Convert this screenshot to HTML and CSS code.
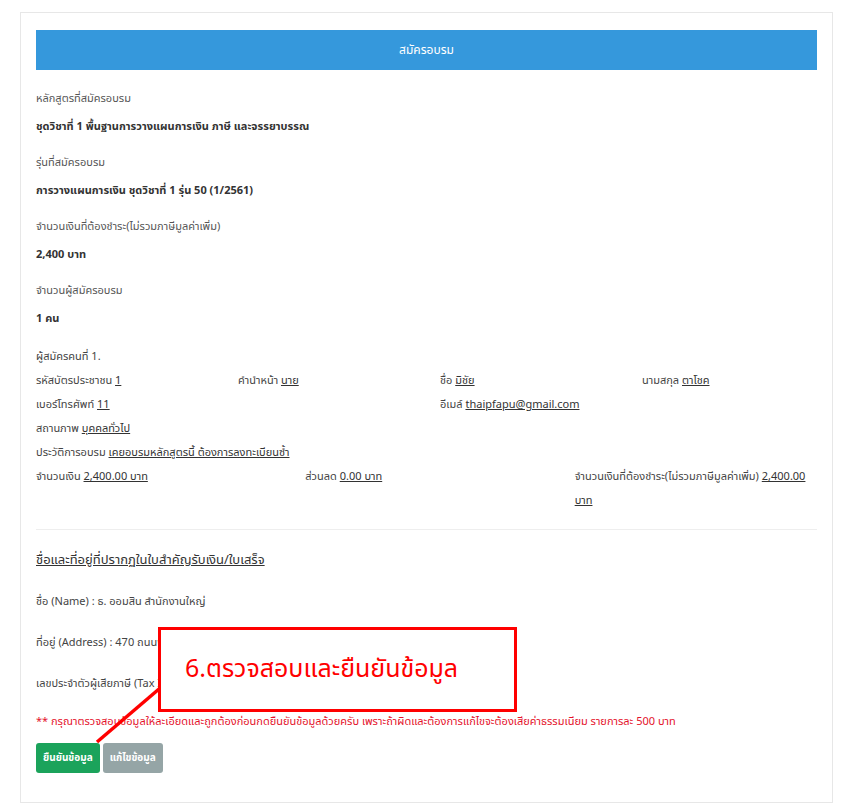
FILE: index.html
```html
<!DOCTYPE html>
<html lang="th">
<head>
  <meta charset="UTF-8" />
  <meta name="viewport" content="width=device-width, initial-scale=1.0" />
  <title>สมัครอบรม</title>
  <link rel="stylesheet" href="styles.css">
</head>
<body>
  <div class="card">
    <div class="card-head">สมัครอบรม</div>

    <div class="field">
      <p class="label">หลักสูตรที่สมัครอบรม</p>
      <p class="value">ชุดวิชาที่ 1 พื้นฐานการวางแผนการเงิน ภาษี และจรรยาบรรณ</p>
    </div>
    <div class="field">
      <p class="label">รุ่นที่สมัครอบรม</p>
      <p class="value">การวางแผนการเงิน ชุดวิชาที่ 1 รุ่น 50 (1/2561)</p>
    </div>
    <div class="field">
      <p class="label">จำนวนเงินที่ต้องชำระ(ไม่รวมภาษีมูลค่าเพิ่ม)</p>
      <p class="value">2,400 บาท</p>
    </div>
    <div class="field">
      <p class="label">จำนวนผู้สมัครอบรม</p>
      <p class="value">1 คน</p>
    </div>

    <div class="applicant">
      <p>ผู้สมัครคนที่ 1.</p>
      <div class="row4">
        <span>รหัสบัตรประชาชน <u>1</u></span>
        <span>คำนำหน้า <u>นาย</u></span>
        <span>ชื่อ <u>มิชัย</u></span>
        <span>นามสกุล <u>ตาโชค</u></span>
      </div>
      <div class="row4">
        <span>เบอร์โทรศัพท์ <u>11</u></span>
        <span></span>
        <span>อีเมล์ <u>thaipfapu@gmail.com</u></span>
        <span></span>
      </div>
      <p>สถานภาพ <u>บุคคลทั่วไป</u></p>
      <p>ประวัติการอบรม <u>เคยอบรมหลักสูตรนี้ ต้องการลงทะเบียนซ้ำ</u></p>
      <div class="row3">
        <span>จำนวนเงิน <u>2,400.00 บาท</u></span>
        <span>ส่วนลด <u>0.00 บาท</u></span>
        <span>จำนวนเงินที่ต้องชำระ(ไม่รวมภาษีมูลค่าเพิ่ม) <u>2,400.00 บาท</u></span>
      </div>
    </div>

    <hr />

    <h4 class="receipt-title">ชื่อและที่อยู่ที่ปรากฏในใบสำคัญรับเงิน/ใบเสร็จ</h4>
    <p class="receipt">ชื่อ (Name) : ธ. ออมสิน สำนักงานใหญ่</p>
    <p class="receipt">ที่อยู่ (Address) : 470 ถนนพหลโยธิน แขวงสามเสนใน เขตพญาไท กรุงเทพฯ 10400</p>
    <p class="receipt">เลขประจำตัวผู้เสียภาษี (Tax ID) : 0994000158386</p>

    <p class="note">** กรุณาตรวจสอบข้อมูลให้ละเอียดและถูกต้องก่อนกดยืนยันข้อมูลด้วยครับ เพราะถ้าผิดและต้องการแก้ไขจะต้องเสียค่าธรรมเนียม รายการละ 500 บาท</p>

    <div class="actions">
      <button class="btn-confirm">ยืนยันข้อมูล</button>
      <button class="btn-edit">แก้ไขข้อมูล</button>
    </div>

    <!-- คำอธิบายขั้นตอน -->
    <div class="callout">6.ตรวจสอบและยืนยันข้อมูล</div>
    <svg class="callout-line" width="80" height="70" viewBox="0 0 80 70">
      <line x1="68" y1="6" x2="6" y2="59" stroke="#ff0000" stroke-width="3.5" />
    </svg>
  </div>
</body>
</html>
```

FILE: styles.css
```css
body {
  font-family: "Noto Sans Thai", "Noto Sans", Arial, sans-serif;
  background-color: #ffffff;
  margin: 0;
  padding: 12px 24px 8px 20px;
  color: #333;
}
.card {
  position: relative;
  border: 1px solid #e7e7e7;
  padding: 17px 15px 29px 15px;
  font-size: 11px;
}
.card-head {
  background-color: #3598dc;
  color: #fff;
  height: 40px;
  line-height: 40px;
  text-align: center;
  font-size: 12px;
  margin-bottom: 19px;
}
p {
  margin: 0;
}
.field {
  margin-bottom: 16px;
}
.field .label {
  line-height: 20px;
  color: #555;
}
.field .value {
  line-height: 20px;
  margin-top: 8px;
  font-weight: bold;
  color: #333;
}
.applicant {
  margin-top: 14px;
  line-height: 24px;
  color: #444;
}
.row4 {
  display: grid;
  grid-template-columns: repeat(4, 1fr);
  column-gap: 27px;
}
.row3 {
  display: grid;
  grid-template-columns: repeat(3, 1fr);
  column-gap: 27px;
}
u {
  color: #333;
}
hr {
  border: none;
  border-top: 1px solid #eee;
  margin: 16px 0 20px;
}
.receipt-title {
  margin: 0;
  font-size: 13px;
  font-weight: normal;
  line-height: 20px;
  text-decoration: underline;
  color: #333;
}
.receipt {
  margin-top: 22px;
  line-height: 20px;
  font-size: 11px;
  color: #444;
}
.receipt + .receipt {
  margin-top: 21px;
}
.note {
  margin-top: 18px;
  line-height: 20px;
  font-size: 11px;
  color: #e4122b;
}
.actions {
  display: flex;
  gap: 3px;
  margin-top: 11px;
}
.actions button {
  height: 30px;
  padding: 0 7px;
  border: none;
  border-radius: 3px;
  color: #fff;
  font-family: inherit;
  font-size: 10px;
  font-weight: bold;
  cursor: pointer;
}
.btn-confirm {
  background-color: #1ba35b;
}
.btn-edit {
  background-color: #95a5a6;
}
.callout {
  position: absolute;
  left: 137px;
  top: 614px;
  width: 329px;
  height: 79px;
  border: 3px solid #ff0000;
  background-color: #fff;
  color: #ff0000;
  font-size: 25px;
  line-height: 79px;
  padding-left: 24px;
  box-sizing: content-box;
}
.callout-line {
  position: absolute;
  left: 70px;
  top: 670px;
}
```
